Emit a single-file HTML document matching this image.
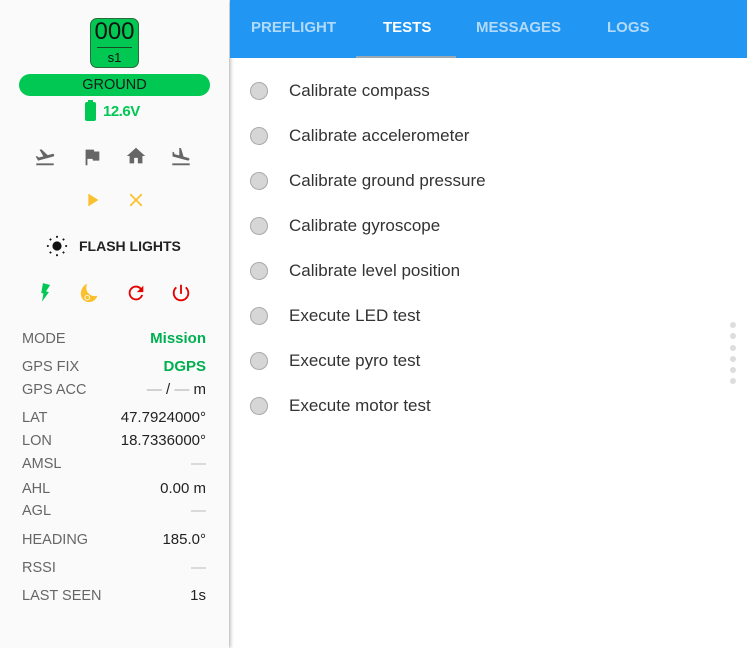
<!DOCTYPE html>
<html><head><meta charset="utf-8"><style>
*{margin:0;padding:0;box-sizing:border-box}
body{width:747px;height:648px;overflow:hidden;background:#fff;font-family:"Liberation Sans",sans-serif;position:relative}
#side{position:absolute;left:0;top:0;width:229px;height:648px;background:#fafafa;box-shadow:1px 0 4px rgba(0,0,0,.35)}
.a{position:absolute}
.ic{position:absolute;width:22px;height:22px}
.row{position:absolute;left:22px;width:184px;font-size:14.5px;color:#666;height:20px;line-height:20px}
.row span{position:absolute;right:0;top:0;line-height:20px;color:#222;font-size:15px}
#tabs{position:absolute;left:230px;top:0;width:517px;height:58px;background:#2196f3}
.tab{position:absolute;top:19px;font-size:15px;font-weight:bold;color:rgba(255,255,255,.65)}
.it{position:absolute;left:250px;height:20px}
.it i{position:absolute;left:0;top:1px;width:18px;height:18px;border-radius:50%;background:#d6d6d6;border:1px solid #a8a8a8}
.it b{position:absolute;left:39px;top:0;font-weight:normal;font-size:17px;color:#333;white-space:nowrap}
.dot{position:absolute;left:730px;width:6px;height:6px;border-radius:50%;background:#ddd}
</style></head><body>
<div id="side">
 <div class="a" style="left:90px;top:18px;width:49px;height:50px;background:#00c853;border:1px solid #2b6b3b;border-radius:7px"></div>
 <div class="a" style="left:90px;top:19px;width:49px;text-align:center;font-size:24px;color:#111;line-height:26px">000</div>
 <div class="a" style="left:97px;top:47px;width:35px;height:1px;background:#1a4a22"></div>
 <div class="a" style="left:90px;top:50px;width:49px;text-align:center;font-size:13px;color:#111">s1</div>
 <div class="a" style="left:19px;top:74px;width:191px;height:22px;background:#00c853;border-radius:11px;text-align:center;font-size:14.5px;line-height:22px;color:#1a1a1a">GROUND</div>
 <div class="a" style="left:85px;top:102px;width:11px;height:19px;background:#00c853;border-radius:2px"></div>
 <div class="a" style="left:88px;top:100px;width:5px;height:3px;background:#00c853"></div>
 <div class="a" style="left:103px;top:103px;font-size:15px;font-weight:bold;color:#00c853;letter-spacing:-.5px">12.6V</div>
 <svg class="ic" style="left:34px;top:146px" viewBox="0 0 24 24" fill="#666"><path d="M2.5 19h19v2h-19zm19.57-9.36c-.21-.8-1.04-1.28-1.84-1.06L14.92 10l-6.9-6.43-1.93.51 4.14 7.17-4.97 1.33-1.97-1.54-1.45.39 1.82 3.16.77 1.33 1.6-.43 5.31-1.42 4.35-1.16L21 11.49c.81-.23 1.28-1.05 1.07-1.85z"/></svg>
 <svg class="ic" style="left:81px;top:146px" viewBox="0 0 24 24" fill="#666"><path d="M14.4 6L14 4H5v17h2v-7h5.6l.4 2h7V6z"/></svg>
 <svg class="ic" style="left:125px;top:145px" viewBox="0 0 24 24" fill="#666"><path d="M10 20v-6h4v6h5v-8h3L12 3 2 12h3v8z"/></svg>
 <svg class="ic" style="left:170px;top:146px" viewBox="0 0 24 24" fill="#666"><path d="M2.5 19h19v2h-19zm7.18-5.73l4.35 1.16 5.31 1.42c.8.21 1.62-.26 1.84-1.06.21-.8-.26-1.62-1.06-1.84l-5.31-1.42-2.76-9.02L10.12 2v8.28L5.15 8.95l-.93-2.32-1.45-.39v5.17l1.6.43 5.31 1.43z"/></svg>
 <svg class="ic" style="left:81px;top:189px" viewBox="0 0 24 24" fill="#fbc02d"><path d="M8 5v14l11-7z"/></svg>
 <svg class="ic" style="left:125px;top:189px" viewBox="0 0 24 24" fill="#fbc02d"><path d="M19 6.41L17.59 5 12 10.59 6.41 5 5 6.41 10.59 12 5 17.59 6.41 19 12 13.41 17.59 19 19 17.59 13.41 12z"/></svg>
 <svg class="ic" style="left:46px;top:235px" viewBox="0 0 24 24" fill="#111"><circle cx="12" cy="12" r="5"/><g stroke="#111" stroke-width="2"><path d="M12 1v2M12 21v2M1 12h2M21 12h2M4.2 4.2l1.4 1.4M18.4 18.4l1.4 1.4M4.2 19.8l1.4-1.4M18.4 5.6l1.4-1.4"/></g></svg>
 <div class="a" style="left:79px;top:238px;font-size:14px;font-weight:bold;color:#222">FLASH LIGHTS</div>
 <svg class="ic" style="left:34px;top:282px" viewBox="0 0 24 24" fill="#00c853"><path d="M7 2v11h3v9l7-12h-4l4-8z" transform="translate(12 12) scale(.8 1) rotate(12) translate(-12 -12)"/></svg>
 <svg class="ic" style="left:79px;top:282px" viewBox="0 0 24 24" fill="#fbc02d"><path d="M9 2c-1.5 3-1.5 7 1 10s6 4 10 3c-1 4-5 7-9 7-5 0-9-4-9-9 0-5 3-10 7-11z"/><circle cx="9" cy="17" r="3" fill="#fafafa"/><circle cx="9" cy="17" r="2"/></svg>
 <svg class="ic" style="left:125px;top:282px" viewBox="0 0 24 24" fill="#e50000"><path d="M17.65 6.35A7.958 7.958 0 0012 4c-4.42 0-7.99 3.58-7.99 8s3.57 8 7.99 8c3.73 0 6.84-2.55 7.73-6h-2.08A5.99 5.99 0 0112 18c-3.31 0-6-2.69-6-6s2.69-6 6-6c1.66 0 3.14.69 4.22 1.78L13 11h7V4l-2.35 2.35z"/></svg>
 <svg class="ic" style="left:170px;top:282px" viewBox="0 0 24 24" fill="#e50000"><path d="M13 3h-2v10h2V3zm4.83 2.17l-1.42 1.42A6.92 6.92 0 0119 12c0 3.87-3.13 7-7 7A6.995 6.995 0 017.58 6.58L6.17 5.17A8.932 8.932 0 003 12a9 9 0 0018 0c0-2.74-1.23-5.18-3.17-6.83z"/></svg>
 <div class="row" style="top:329px">MODE<span style="color:#00b050;font-weight:bold">Mission</span></div>
 <div class="row" style="top:357px">GPS FIX<span style="color:#00b050;font-weight:bold">DGPS</span></div>
 <div class="row" style="top:380px">GPS ACC<span><span style="position:static;color:#aaa">—</span> / <span style="position:static;color:#aaa">—</span> m</span></div>
 <div class="row" style="top:408px">LAT<span>47.7924000°</span></div>
 <div class="row" style="top:431px">LON<span>18.7336000°</span></div>
 <div class="row" style="top:454px">AMSL<span style="color:#bbb">—</span></div>
 <div class="row" style="top:479px">AHL<span>0.00 m</span></div>
 <div class="row" style="top:501px">AGL<span style="color:#bbb">—</span></div>
 <div class="row" style="top:530px">HEADING<span>185.0°</span></div>
 <div class="row" style="top:558px">RSSI<span style="color:#bbb">—</span></div>
 <div class="row" style="top:586px">LAST SEEN<span>1s</span></div>
</div>
<div id="tabs">
 <div class="tab" style="left:21px">PREFLIGHT</div>
 <div class="tab" style="left:153px;color:#fff">TESTS</div>
 <div class="tab" style="left:246px">MESSAGES</div>
 <div class="tab" style="left:377px">LOGS</div>
 <div class="a" style="left:126px;top:56px;width:100px;height:2px;background:#9aa8b4"></div>
</div>
<div class="it" style="top:81px"><i></i><b>Calibrate compass</b></div>
<div class="it" style="top:126px"><i></i><b>Calibrate accelerometer</b></div>
<div class="it" style="top:171px"><i></i><b>Calibrate ground pressure</b></div>
<div class="it" style="top:216px"><i></i><b>Calibrate gyroscope</b></div>
<div class="it" style="top:261px"><i></i><b>Calibrate level position</b></div>
<div class="it" style="top:306px"><i></i><b>Execute LED test</b></div>
<div class="it" style="top:351px"><i></i><b>Execute pyro test</b></div>
<div class="it" style="top:396px"><i></i><b>Execute motor test</b></div>
<div class="dot" style="top:322px"></div><div class="dot" style="top:333px"></div><div class="dot" style="top:345px"></div>
<div class="dot" style="top:356px"></div><div class="dot" style="top:367px"></div><div class="dot" style="top:378px"></div>
</body></html>
